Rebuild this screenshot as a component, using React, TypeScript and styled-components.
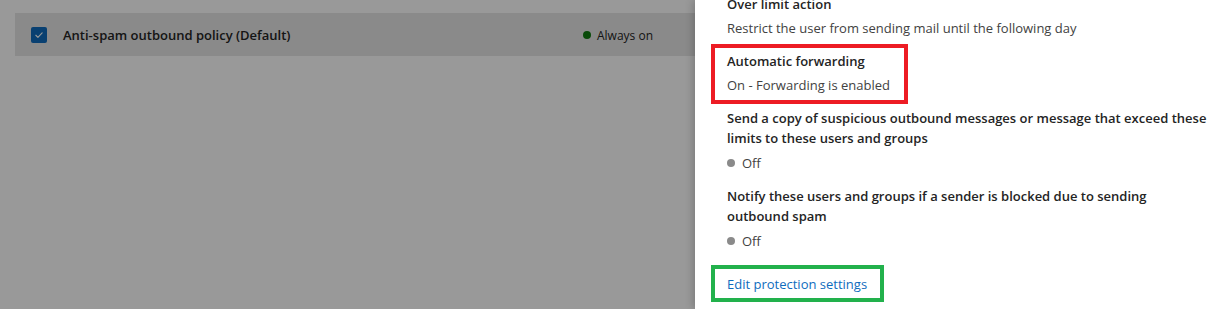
import styled, { createGlobalStyle } from "styled-components";

const GlobalStyle = createGlobalStyle`
  html, body {
    margin: 0;
    padding: 0;
    background: #ffffff;
  }
  body {
    font-family: "Open Sans", "Noto Sans", "Liberation Sans", sans-serif;
    font-size: 13px;
    color: #242424;
    -webkit-font-smoothing: antialiased;
  }
`;

type Setting = {
  title: string[];
  value: string;
  status?: boolean;
  highlight?: boolean;
};

const settings: Setting[] = [
  {
    title: ["Over limit action"],
    value: "Restrict the user from sending mail until the following day",
  },
  {
    title: ["Automatic forwarding"],
    value: "On - Forwarding is enabled",
    highlight: true,
  },
  {
    title: [
      "Send a copy of suspicious outbound messages or message that exceed these",
      "limits to these users and groups",
    ],
    value: "Off",
    status: true,
  },
  {
    title: [
      "Notify these users and groups if a sender is blocked due to sending",
      "outbound spam",
    ],
    value: "Off",
    status: true,
  },
];

function CheckIcon() {
  return (
    <svg width="10" height="10" viewBox="0 0 12 12" fill="none">
      <path
        d="M2.2 6.3l2.5 2.5 5.1-5.4"
        stroke="#ffffff"
        strokeWidth="1.3"
        strokeLinecap="round"
        strokeLinejoin="round"
      />
    </svg>
  );
}

function App() {
  return (
    <>
      <GlobalStyle />
      <Page>
        <ListArea>
          <PolicyRow>
            <Checkbox>
              <CheckIcon />
            </Checkbox>
            <PolicyName>Anti-spam outbound policy (Default)</PolicyName>
            <PolicyStatus>
              <Dot color="#107c10" />
              Always on
            </PolicyStatus>
          </PolicyRow>
          <Dim />
        </ListArea>
        <Flyout>
          <FlyoutBody>
            {settings.map((s) => {
              const content = (
                <>
                  <SettingTitle>
                    {s.title.map((line) => (
                      <span key={line}>{line}</span>
                    ))}
                  </SettingTitle>
                  <SettingValue $status={s.status}>
                    {s.status && <Dot color="#8a8a8a" />}
                    {s.value}
                  </SettingValue>
                </>
              );
              return (
                <Section key={s.title[0]}>
                  {s.highlight ? (
                    <Highlight $color="#ed1c24" $pad="3px 14px 5px 12px">
                      {content}
                    </Highlight>
                  ) : (
                    content
                  )}
                </Section>
              );
            })}
            <LinkSection>
              <Highlight $color="#22b14c" $pad="5px 13px 4px 12px">
                <EditLink href="#">Edit protection settings</EditLink>
              </Highlight>
            </LinkSection>
          </FlyoutBody>
        </Flyout>
      </Page>
    </>
  );
}

const Page = styled.div`
  display: flex;
  width: 1231px;
  height: 309px;
  overflow: hidden;
`;

const ListArea = styled.div`
  position: relative;
  flex: 1;
  padding: 13px 0 0 15px;
  background: #ffffff;
`;

const Dim = styled.div`
  position: absolute;
  inset: 0;
  background: rgba(0, 0, 0, 0.4);
`;

const PolicyRow = styled.div`
  display: flex;
  align-items: center;
  height: 43px;
  padding-left: 16px;
  background: #e6e6e6;
`;

const Checkbox = styled.span`
  display: flex;
  align-items: center;
  justify-content: center;
  width: 16px;
  height: 16px;
  border-radius: 2px;
  background: #0f6cbd;
  margin-right: 16px;
  flex-shrink: 0;
`;

const PolicyName = styled.span`
  width: 520px;
  font-size: 13px;
  font-weight: 600;
  color: #242424;
`;

const PolicyStatus = styled.span`
  display: flex;
  align-items: center;
  gap: 6px;
  font-size: 12px;
  color: #242424;
  padding-top: 1px;
`;

const Dot = styled.span<{ color: string }>`
  display: inline-block;
  width: 8px;
  height: 8px;
  border-radius: 50%;
  background: ${(p) => p.color};
  flex-shrink: 0;
`;

const Flyout = styled.aside`
  position: relative;
  z-index: 1;
  width: 536px;
  flex-shrink: 0;
  background: #ffffff;
  box-shadow: -2px 0 8px rgba(0, 0, 0, 0.2);
  overflow: hidden;
  padding-left: 32px;
  box-sizing: border-box;
`;

/* the flyout is scrolled a little: the first title sits under the top edge */
const FlyoutBody = styled.div`
  margin-top: -6px;
`;

const Section = styled.section`
  margin-bottom: 13px;
`;

const Highlight = styled.div<{ $color: string; $pad: string }>`
  width: fit-content;
  border: 4px solid ${(p) => p.$color};
  padding: ${(p) => p.$pad};
  margin: -7px 0 -9px -16px;
`;

const SettingTitle = styled.div`
  display: flex;
  flex-direction: column;
  font-weight: 600;
  line-height: 20px;
  color: #242424;
  white-space: nowrap;
`;

const SettingValue = styled.div<{ $status?: boolean }>`
  display: flex;
  align-items: center;
  gap: 7px;
  min-height: 20px;
  margin-top: ${(p) => (p.$status ? "5px" : "4px")};
  line-height: 20px;
  color: #424242;
`;

const LinkSection = styled.div`
  margin-top: 21px;
`;

const EditLink = styled.a`
  display: block;
  line-height: 20px;
  color: #0f6cbd;
  text-decoration: none;
`;

export default App;
